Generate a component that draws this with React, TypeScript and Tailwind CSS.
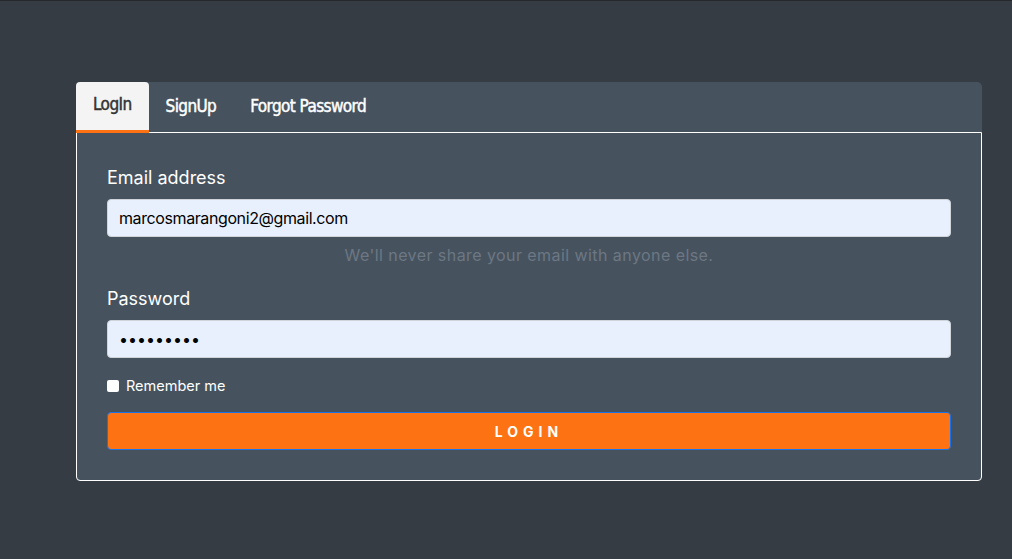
import React, { useState } from 'react';

const tabs = ['LogIn', 'SignUp', 'Forgot Password'];

export default function App() {
  const [active, setActive] = useState(0);
  const [remember, setRemember] = useState(false);

  return (
    <div
      className="min-h-[559px] w-full bg-[#353c44] border-t border-[#25282c] pt-[81px] px-[76px]"
      style={{ fontFamily: 'Inter, "Liberation Sans", sans-serif' }}
    >
      <div className="w-[906px]">
        {/* Tabs */}
        <div className="flex h-[50px] bg-[#46535f] rounded-t-[5px]">
          {tabs.map((tab, i) => (
            <button
              key={tab}
              onClick={() => setActive(i)}
              className={
                i === active
                  ? 'relative z-10 h-[51px] px-[17px] pb-[2px] bg-[#f4f4f4] text-[#333] rounded-t-[4px] border-b-[3px] border-[#fd7314] text-[17px] font-stretch-condensed font-normal tracking-[-0.035em] [-webkit-text-stroke:0.45px_currentColor]'
                  : 'h-[50px] px-[17px] text-white text-[17px] font-stretch-condensed font-normal tracking-[-0.035em] [-webkit-text-stroke:0.45px_currentColor]'
              }
              style={{ fontFamily: '"DejaVu Sans", sans-serif' }}
            >
              {tab}
            </button>
          ))}
        </div>

        {/* Form body */}
        <div className="bg-[#46535f] border border-white rounded-b-[4px] px-[30px] pt-[34px] pb-[30px]">
          <label className="block text-white text-[18px] leading-[22px] mb-[10px]">Email address</label>
          <input
            type="email"
            defaultValue="marcosmarangoni2@gmail.com"
            className="block w-full h-[38px] px-[11px] bg-[#e8f0fe] border border-[#ced4da] rounded-[4px] text-[16px] tracking-[-0.025em] text-black outline-none"
          />
          <p className="text-center text-[#6d7783] text-[16px] leading-[20px] tracking-[0.027em] mt-[8px]">
            We'll never share your email with anyone else.
          </p>

          <label className="block text-white text-[18px] leading-[22px] mt-[23px] mb-[10px]">Password</label>
          <input
            type="password"
            defaultValue="123456789"
            className="block w-full h-[38px] px-[11px] bg-[#e8f0fe] border border-[#ced4da] rounded-[4px] text-[16px] text-black outline-none"
          />

          <label className="flex items-center gap-[7px] mt-[18px] text-white text-[14.5px] leading-[20px]">
            <input
              type="checkbox"
              checked={remember}
              onChange={() => setRemember(!remember)}
              className="w-[12px] h-[12px] appearance-none bg-white rounded-[2px]"
            />
            Remember me
          </label>

          <button className="mt-[16px] w-full h-[38px] bg-[#fd7314] border border-[#1a73e8] rounded-[4px] text-white text-[14px] font-bold tracking-[0.36em]">
            LOGIN
          </button>
        </div>
      </div>
    </div>
  );
}
